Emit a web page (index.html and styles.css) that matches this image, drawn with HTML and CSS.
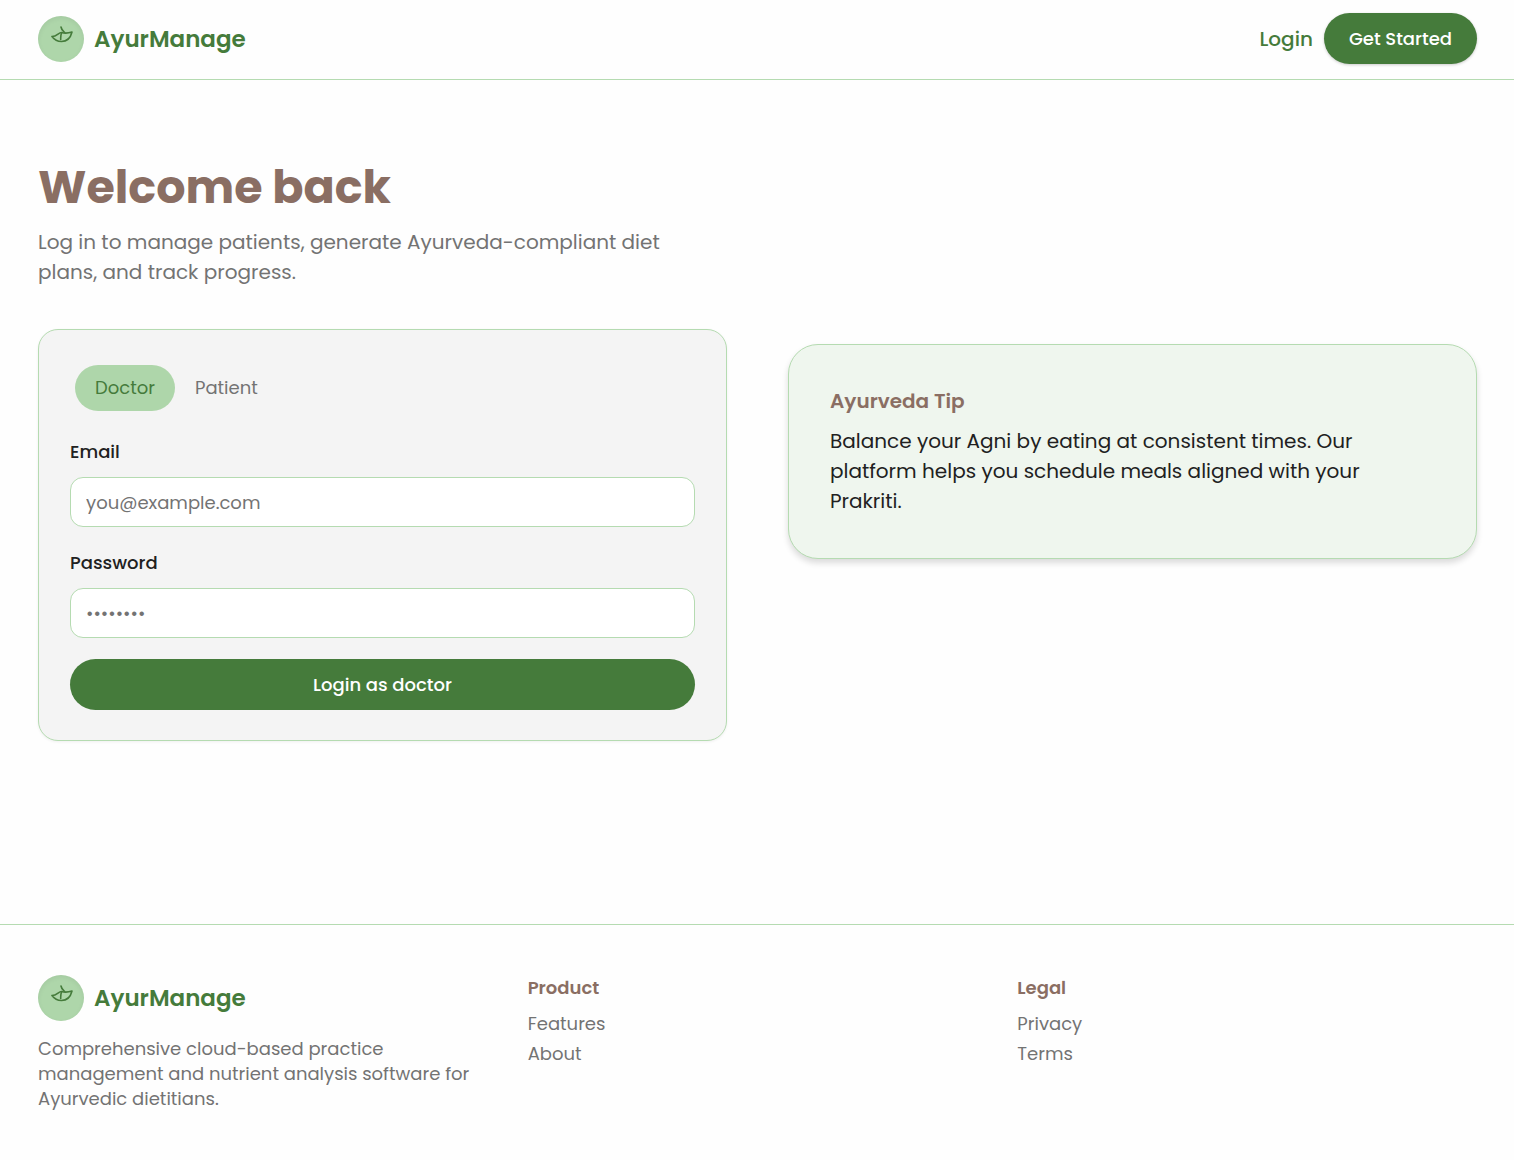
FILE: index.html
```html
<!DOCTYPE html>
<html lang="en">
<head>
<meta charset="utf-8">
<meta name="viewport" content="width=device-width, initial-scale=1">
<title>AyurManage – Login</title>
<link rel="stylesheet" href="styles.css">
</head>
<body>
<header class="site-header">
  <a class="brand" href="#">
    <span class="brand-mark"><svg viewBox="0 0 22 18" aria-hidden="true"><path d="M1 10.500C6 10.500 7.500 6.500 10.500 6.500C14 7.500 18 7 21 6C19.500 12 15.500 15.500 10.500 15.500C6.500 15.500 3.500 14 1 10.500Z"/><path d="M10 1C10.500 4 12 5 13.700 6.500M10.500 7C9.500 9.500 9.700 10.500 9.700 13.500"/></svg></span>
    <span class="brand-name">AyurManage</span>
  </a>
  <nav class="site-nav">
    <a class="nav-link" href="#">Login</a>
    <a class="nav-cta" href="#">Get Started</a>
  </nav>
</header>

<main class="login">
  <section>
    <h1 class="title">Welcome back</h1>
    <p class="lead">Log in to manage patients, generate Ayurveda-compliant diet plans, and track progress.</p>
    <form class="login-card">
      <div class="tabs">
        <button class="tab tab-active" type="button">Doctor</button>
        <button class="tab" type="button">Patient</button>
      </div>
      <div class="field">
        <label for="email">Email</label>
        <input id="email" type="email" placeholder="you@example.com">
      </div>
      <div class="field">
        <label for="password">Password</label>
        <input id="password" type="password" placeholder="••••••••">
      </div>
      <button class="submit" type="submit">Login as doctor</button>
    </form>
  </section>
  <aside class="tip">
    <h2 class="tip-title">Ayurveda Tip</h2>
    <p class="tip-text">Balance your Agni by eating at consistent times. Our platform helps you schedule meals aligned with your Prakriti.</p>
  </aside>
</main>

<footer class="site-footer">
  <div>
    <a class="brand" href="#">
      <span class="brand-mark"><svg viewBox="0 0 22 18" aria-hidden="true"><path d="M1 10.500C6 10.500 7.500 6.500 10.500 6.500C14 7.500 18 7 21 6C19.500 12 15.500 15.500 10.500 15.500C6.500 15.500 3.500 14 1 10.500Z"/><path d="M10 1C10.500 4 12 5 13.700 6.500M10.500 7C9.500 9.500 9.700 10.500 9.700 13.500"/></svg></span>
      <span class="brand-name">AyurManage</span>
    </a>
    <p class="about">Comprehensive cloud-based practice management and nutrient analysis software for Ayurvedic dietitians.</p>
  </div>
  <nav class="footer-nav" aria-label="Product">
    <h3>Product</h3>
    <a href="#">Features</a>
    <a href="#">About</a>
  </nav>
  <nav class="footer-nav" aria-label="Legal">
    <h3>Legal</h3>
    <a href="#">Privacy</a>
    <a href="#">Terms</a>
  </nav>
</footer>
</body>
</html>
```
FILE: styles.css
```css
:root {
  --green: #457b3b;
  --mint: #aed6aa;
  --line: #b5dbb1;
  --brown: #8a6e63;
  --grey: #737373;
  --ink: #212121;
}

* { box-sizing: border-box; }

body {
  margin: 0;
  background: #fefefe;
  color: var(--ink);
  font-family: Poppins, Inter, sans-serif;
  font-size: 18px;
  line-height: 26px;
}

h1, h2, h3, p { margin: 0; }
a { color: inherit; text-decoration: none; }
button, input { font: inherit; }

.site-header {
  display: flex;
  align-items: center;
  justify-content: space-between;
  padding: 13px 37px 15px 38px;
  border-bottom: 1px solid var(--line);
}

.brand {
  display: flex;
  align-items: center;
  gap: 10px;
  color: var(--green);
}

.brand-mark {
  display: flex;
  justify-content: center;
  width: 46px;
  height: 46px;
  padding-top: 10px;
  border-radius: 50%;
  background: var(--mint);
  box-shadow: inset 0 2px 5px rgba(0, 0, 0, 0.06);
}

.brand-mark svg {
  width: 22px;
  height: 18px;
  margin-left: 2px;
  fill: none;
  stroke: currentColor;
  stroke-width: 1.6;
  stroke-linecap: round;
  stroke-linejoin: round;
}

.brand-name {
  font-size: 23px;
  font-weight: 600;
}

.site-nav {
  display: flex;
  align-items: center;
  gap: 11px;
}

.nav-link {
  color: var(--green);
  font-size: 20px;
  font-weight: 500;
}

.nav-cta {
  padding: 13px 25px 12px;
  border-radius: 26px;
  background: var(--green);
  box-shadow: 0 1px 3px rgba(0, 0, 0, 0.2);
  color: #fff;
  font-weight: 500;
}

.login {
  display: grid;
  grid-template-columns: 1fr 1fr;
  align-items: center;
  gap: 61px;
  padding: 82px 37px 183px 38px;
}

.title {
  color: var(--brown);
  font-size: 46px;
  font-weight: 700;
  line-height: 50px;
}

.lead {
  max-width: 660px;
  margin-top: 15px;
  color: var(--grey);
  font-size: 20px;
  line-height: 30px;
}

.login-card {
  margin-top: 42px;
  padding: 30px 31px;
  border: 1px solid var(--line);
  border-radius: 20px;
  background: #f4f4f4;
  box-shadow: 0 1px 3px rgba(0, 0, 0, 0.06);
}

.tabs {
  display: flex;
  padding: 5px;
}

.tab {
  padding: 10px 20px;
  border: 0;
  border-radius: 23px;
  background: none;
  color: var(--grey);
}

.tab-active {
  background: var(--mint);
  color: var(--green);
}

.field {
  display: grid;
  gap: 12px;
  margin-top: 23px;
}

.field label { font-weight: 500; }

.field input {
  width: 100%;
  height: 50px;
  padding: 0 15px;
  border: 1px solid var(--line);
  border-radius: 13px;
  background: #fff;
  color: var(--ink);
}

.field input::placeholder { color: var(--grey); opacity: 1; }

.submit {
  width: 100%;
  height: 51px;
  margin-top: 21px;
  border: 0;
  border-radius: 26px;
  background: var(--green);
  color: #fff;
  font-weight: 500;
}

.tip {
  padding: 41px 41px 42px;
  border: 1px solid var(--line);
  border-radius: 30px;
  background: #eff6ee;
  box-shadow: 0 4px 6px rgba(0, 0, 0, 0.14);
}

.tip-title {
  color: var(--brown);
  font-size: 20px;
  font-weight: 600;
  line-height: 30px;
}

.tip-text {
  max-width: 560px;
  margin-top: 10px;
  font-size: 20px;
  line-height: 30px;
}

.site-footer {
  display: grid;
  grid-template-columns: repeat(3, 1fr);
  gap: 30px;
  padding: 50px 37px 47px 38px;
  border-top: 1px solid var(--line);
}

.about {
  margin-top: 15px;
  color: var(--grey);
  line-height: 25px;
}

.footer-nav {
  display: flex;
  flex-direction: column;
  gap: 4px;
  color: var(--grey);
}

.footer-nav h3 {
  margin-bottom: 6px;
  color: var(--brown);
  font-size: 18px;
  font-weight: 600;
}
```
